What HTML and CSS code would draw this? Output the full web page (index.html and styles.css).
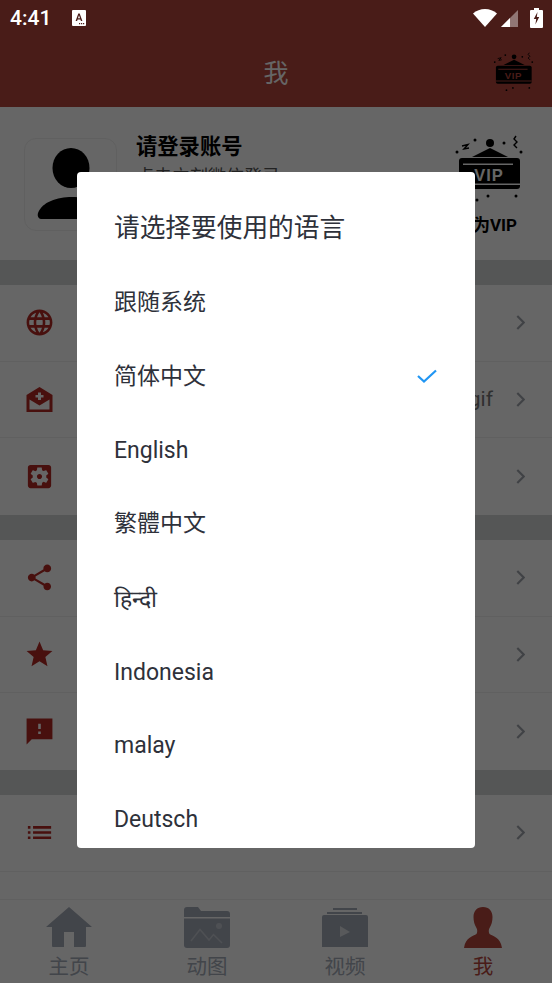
FILE: index.html
```html
<!DOCTYPE html>
<html lang="zh-CN">

<head>
  <meta charset="UTF-8">
  <meta name="viewport" content="width=device-width, initial-scale=1.0">
  <title>我</title>
  <link rel="stylesheet" href="styles.css">
</head>

<body>
  <div class="screen">
    <div class="status">
      <span class="clock">4:41</span>
      <svg class="status-a" width="14" height="16" viewBox="0 0 14 16">
        <path d="M1 0h12a1 1 0 0 1 1 1v14a1 1 0 0 1-1 1H1a1 1 0 0 1-1-1V1a1 1 0 0 1 1-1z" fill="#fff" />
        <path d="M3.600 11 6.300 3.500h1.400L10.400 11H8.900l-.5-1.600H5.600L5.100 11zM6 8.200h2L7 5.200z" fill="#491c18" />
        <path d="M7 13h1.200v1.200H7zM9 13h1.200v1.200H9zM11 13h1.200v1.200H11z" fill="#491c18" />
      </svg>
      <span class="status-space"></span>
      <svg class="status-wifi" width="24" height="18" viewBox="0 0 24 18">
        <path d="M0 4.500C3.400 1.700 7.500 0 12 0s8.600 1.700 12 4.500L12 18z" fill="#fff" />
      </svg>
      <svg class="status-signal" width="17" height="17" viewBox="0 0 17 17">
        <path d="M17 0v17H0z" fill="#fff" opacity=".4" />
        <path d="M9 8v9H0z" fill="#fff" />
      </svg>
      <svg class="status-battery" width="13" height="20" viewBox="0 0 13 20">
        <path d="M4 0h5v2h3a1 1 0 0 1 1 1v16a1 1 0 0 1-1 1H1a1 1 0 0 1-1-1V3a1 1 0 0 1 1-1h3z" fill="#fff" />
        <path d="M7.500 4 3.800 11h2.400L5.400 16.500 9.200 9H6.800z" fill="#491c18" />
      </svg>
    </div>

    <header class="topbar">
      <h1>我</h1>
      <svg class="topbar-vip" viewBox="0 0 70 72">
        <circle cx="36" cy="8" r="4" />
        <path d="M18 22 36 13 54 22z" />
        <rect x="5" y="23" width="61" height="31" rx="3" />
        <path class="vip-cut" d="M9 28.500h50v1.400H9zM5 48.500h61v1.400H5z" />
        <text class="vip-text" x="35" y="46" text-anchor="middle">VIP</text>
        <circle cx="21" cy="5" r="1.500" />
        <circle cx="50" cy="8" r="1.500" />
        <circle cx="3" cy="17" r="1.500" />
        <circle cx="67" cy="17" r="1.500" />
        <circle cx="23" cy="65" r="1.500" />
        <circle cx="34" cy="61" r="1.500" />
        <circle cx="62" cy="61" r="1.500" />
        <path class="vip-line" d="M8 11l6-1.500-4 4.500 5-1M62 1l-2 3 3 3-3 3 3 3" />
      </svg>
    </header>

    <section class="profile">
      <div class="avatar">
        <svg width="70" height="74" viewBox="0 0 70 74">
          <ellipse cx="34" cy="21" rx="18.500" ry="20" />
          <path d="M1 66C5 55 20 50 35 50s30 5 34 16c1 4-1 6-4 6H5c-3 0-5-2-4-6z" />
        </svg>
      </div>
      <div class="profile-text">
        <div class="profile-name">请登录账号</div>
        <div class="profile-sub">点击立刻微信登录</div>
      </div>
      <div class="profile-vip">
        <svg class="profile-vip-icon" viewBox="0 0 70 72">
          <circle cx="36" cy="8" r="4" />
          <path d="M18 22 36 13 54 22z" />
          <rect x="5" y="23" width="61" height="31" rx="3" />
          <path class="vip-cut" d="M9 28.500h50v1.400H9zM5 48.500h61v1.400H5z" />
          <text class="vip-text" x="35" y="46" text-anchor="middle">VIP</text>
          <circle cx="21" cy="5" r="1.500" />
          <circle cx="50" cy="8" r="1.500" />
          <circle cx="3" cy="17" r="1.500" />
          <circle cx="67" cy="17" r="1.500" />
          <circle cx="23" cy="65" r="1.500" />
          <circle cx="34" cy="61" r="1.500" />
          <circle cx="62" cy="61" r="1.500" />
          <path class="vip-line" d="M8 11l6-1.500-4 4.500 5-1M62 1l-2 3 3 3-3 3 3 3" />
        </svg>
        <span>成为VIP</span>
      </div>
    </section>

    <div class="group">
      <div class="row">
        <svg class="row-icon" viewBox="0 0 24 24"><path d="M11.990 2C6.470 2 2 6.480 2 12s4.470 10 9.990 10C17.520 22 22 17.520 22 12S17.520 2 11.990 2zm6.930 6h-2.950c-.32-1.250-.78-2.450-1.380-3.560 1.840.63 3.370 1.910 4.330 3.560zM12 4.040c.83 1.200 1.480 2.530 1.910 3.960h-3.820c.43-1.430 1.080-2.760 1.910-3.960zM4.260 14C4.100 13.360 4 12.690 4 12s.1-1.360.26-2h3.380c-.08.66-.14 1.320-.14 2 0 .68.06 1.340.14 2H4.260zm.82 2h2.950c.32 1.250.78 2.450 1.380 3.560-1.840-.63-3.370-1.900-4.330-3.560zm2.950-8H5.080c.96-1.660 2.490-2.930 4.330-3.560C8.810 5.550 8.350 6.750 8.030 8zM12 19.960c-.83-1.200-1.480-2.530-1.910-3.960h3.820c-.43 1.430-1.080 2.760-1.910 3.960zM14.340 14H9.660c-.09-.66-.16-1.320-.16-2 0-.68.07-1.350.16-2h4.680c.09.650.16 1.320.16 2 0 .68-.07 1.340-.16 2zm.25 5.560c.6-1.110 1.060-2.310 1.380-3.560h2.950c-.96 1.650-2.490 2.930-4.330 3.560zM16.360 14c.08-.66.14-1.320.14-2 0-.68-.06-1.340-.14-2h3.380c.16.64.26 1.310.26 2s-.1 1.360-.26 2h-3.380z" /></svg>
        <svg class="chevron" viewBox="0 0 8 14"><path d="M1 1l6 6-6 6" /></svg>
      </div>
      <div class="row">
        <svg class="row-icon" viewBox="0 0 31 31"><path fill-rule="evenodd" d="M15.500 3 28.500 11v17h-26V11zM14 8.500V11h-2.500v2.500H14V16h3v-2.500h2.500V11H17V8.500zM5.500 15.500V25.500h20V15.500l-10 6z" /></svg>
        <span class="row-value">gif</span>
        <svg class="chevron" viewBox="0 0 8 14"><path d="M1 1l6 6-6 6" /></svg>
      </div>
      <div class="row">
        <svg class="row-icon" viewBox="0 0 24 24"><path d="M12 10c-1.100 0-2 .9-2 2s.9 2 2 2 2-.9 2-2-.9-2-2-2zm7-7H5c-1.110 0-2 .9-2 2v14c0 1.100.89 2 2 2h14c1.110 0 2-.9 2-2V5c0-1.100-.89-2-2-2zm-1.750 9c0 .23-.02.46-.05.68l1.480 1.160c.13.11.17.3.08.45l-1.400 2.420c-.09.15-.27.21-.43.15l-1.740-.7c-.36.28-.76.51-1.180.69l-.26 1.850c-.03.17-.18.3-.35.3h-2.800c-.17 0-.32-.13-.35-.29l-.26-1.850c-.43-.18-.82-.41-1.180-.69l-1.740.7c-.16.06-.34 0-.43-.15l-1.400-2.420c-.09-.15-.05-.34.08-.45l1.480-1.160c-.03-.23-.05-.46-.05-.69 0-.23.02-.46.05-.68l-1.480-1.160c-.13-.11-.17-.3-.08-.45l1.400-2.420c.09-.15.27-.21.43-.15l1.740.7c.36-.28.76-.51 1.180-.69l.26-1.850c.03-.17.18-.3.35-.3h2.800c.17 0 .32.13.35.29l.26 1.850c.43.18.82.41 1.180.69l1.740-.7c.16-.06.34 0 .43.15l1.400 2.420c.09.15.05.34-.08.45l-1.480 1.160c.03.23.05.46.05.69z" /></svg>
        <svg class="chevron" viewBox="0 0 8 14"><path d="M1 1l6 6-6 6" /></svg>
      </div>
    </div>

    <div class="group">
      <div class="row">
        <svg class="row-icon" viewBox="0 0 24 24"><path d="M18 16.080c-.76 0-1.440.3-1.960.77L8.910 12.700c.05-.23.09-.46.09-.7s-.04-.47-.09-.7l7.050-4.110c.54.5 1.250.81 2.040.81 1.660 0 3-1.340 3-3s-1.340-3-3-3-3 1.340-3 3c0 .24.04.47.09.7L8.040 9.810C7.500 9.310 6.790 9 6 9c-1.660 0-3 1.340-3 3s1.340 3 3 3c.79 0 1.500-.31 2.040-.81l7.120 4.160c-.05.21-.08.43-.08.65 0 1.610 1.310 2.920 2.920 2.920 1.610 0 2.920-1.310 2.920-2.920s-1.310-2.920-2.920-2.920z" /></svg>
        <svg class="chevron" viewBox="0 0 8 14"><path d="M1 1l6 6-6 6" /></svg>
      </div>
      <div class="row">
        <svg class="row-icon" viewBox="0 0 24 24"><path d="M12 17.270 18.180 21l-1.640-7.030L22 9.240l-7.190-.61L12 2 9.190 8.630 2 9.240l5.460 4.730L5.820 21z" /></svg>
        <svg class="chevron" viewBox="0 0 8 14"><path d="M1 1l6 6-6 6" /></svg>
      </div>
      <div class="row">
        <svg class="row-icon" viewBox="0 0 24 24"><path d="M22 2H2v20l4-4h16zM13 14h-2v-2h2zm0-4h-2V6h2z" /></svg>
        <svg class="chevron" viewBox="0 0 8 14"><path d="M1 1l6 6-6 6" /></svg>
      </div>
    </div>

    <div class="group group-last">
      <div class="row">
        <svg class="row-icon" viewBox="0 0 24 24"><path d="M3 13h2v-2H3v2zm0 4h2v-2H3v2zm0-8h2V7H3v2zm4 4h14v-2H7v2zm0 4h14v-2H7v2zM7 7v2h14V7H7z" /></svg>
        <svg class="chevron" viewBox="0 0 8 14"><path d="M1 1l6 6-6 6" /></svg>
      </div>
    </div>

    <nav class="tabs">
      <div class="tab">
        <svg width="46" height="41" viewBox="0 0 46 41"><path d="M23 0 46 20H40V39a1 1 0 0 1-1 1H28V25H18V40H7a1 1 0 0 1-1-1V20H0z" /></svg>
        <span>主页</span>
      </div>
      <div class="tab">
        <svg width="46" height="41" viewBox="0 0 46 41">
          <path d="M0 3a3 3 0 0 1 3-3h11l3 4h26a3 3 0 0 1 3 3v3H0z" />
          <path d="M0 11.500h46V38a3 3 0 0 1-3 3H3a3 3 0 0 1-3-3z" />
          <circle cx="35" cy="19" r="3" fill="#fff" opacity=".35" />
          <path d="M7 34 16 22.500 25 33 29.500 27.500 38 36" class="tab-cut" />
        </svg>
        <span>动图</span>
      </div>
      <div class="tab">
        <svg width="46" height="41" viewBox="0 0 46 41">
          <path d="M11 1h24v2H11zM5 5h35v2H5z" />
          <path d="M2 8h42a2 2 0 0 1 2 2v30H0V10a2 2 0 0 1 2-2z" />
          <path d="M18 19 28 25 18 30z" fill="#fff" opacity=".6" />
        </svg>
        <span>视频</span>
      </div>
      <div class="tab tab-active">
        <svg width="38" height="41" viewBox="0 0 38 41"><path d="M19 0c6 0 9.500 4 9.500 10 0 4-1 8-3 11-1 2-1 4 0 6 3 2 11 3 12.500 14H0C1.500 30 9.500 29 12.500 27c1-2 1-4 0-6-2-3-3-7-3-11C9.500 4 13 0 19 0z" /></svg>
        <span>我</span>
      </div>
    </nav>

    <div class="overlay">
      <div class="dialog">
        <h2 class="dialog-title">请选择要使用的语言</h2>
        <div class="lang"><span class="lang-cjk">跟随系统</span></div>
        <div class="lang">
          <span class="lang-cjk">简体中文</span>
          <svg class="tick" width="20" height="14" viewBox="0 0 20 14"><path d="M1 7l6 5.500L19 1.500" /></svg>
        </div>
        <div class="lang">English</div>
        <div class="lang"><span class="lang-cjk">繁體中文</span></div>
        <div class="lang">हिन्दी</div>
        <div class="lang">Indonesia</div>
        <div class="lang">malay</div>
        <div class="lang">Deutsch</div>
      </div>
    </div>
  </div>
</body>

</html>
```

FILE: styles.css
```css
* {
  box-sizing: border-box;
}
body {
  margin: 0;
  font-family: Roboto, 'Noto Sans CJK SC', sans-serif;
  background-color: #fff;
}
.screen {
  position: relative;
  width: 552px;
  height: 983px;
  overflow: hidden;
  display: flex;
  flex-direction: column;
  background-color: #fff;
}
.status {
  height: 36px;
  flex: none;
  padding: 0 9px 0 10px;
  display: flex;
  align-items: center;
  background-color: #491c18;
  position: relative;
  z-index: 2;
}
.clock {
  color: #fff;
  font-size: 21px;
  font-weight: 500;
  width: 62px;
}
.status-space {
  flex: 1;
}
.status-signal {
  margin-left: 4px;
}
.status-battery {
  margin-left: 12px;
}
.topbar {
  height: 71px;
  flex: none;
  padding-bottom: 2px;
  display: flex;
  align-items: center;
  justify-content: center;
  position: relative;
  background-color: #b6463c;
}
.topbar h1 {
  margin: 0;
  font-size: 25px;
  font-weight: 400;
  color: #fff;
}
.topbar-vip {
  position: absolute;
  left: 493px;
  top: 16px;
  width: 41px;
  height: 42.500px;
  --cut: #b6463c;
}
.profile {
  height: 153px;
  flex: none;
  padding: 31px 28px 0 24px;
  display: flex;
  align-items: flex-start;
}
.avatar {
  width: 93px;
  height: 93px;
  flex: none;
  border: 1px solid #f0f0f0;
  border-radius: 12px;
  padding: 8px 0 0 12px;
}
.profile-text {
  margin-left: 19px;
  flex: 1;
}
.profile-name {
  font-size: 21.300px;
  line-height: 30px;
  font-weight: 700;
  margin-top: -6px;
  color: #000;
}
.profile-sub {
  font-size: 18px;
  line-height: 30px;
  color: #555;
}
.profile-vip {
  width: 70px;
  margin-top: -3px;
  display: flex;
  flex-direction: column;
  align-items: flex-end;
  font-size: 17px;
  font-weight: 700;
  color: #000;
  white-space: nowrap;
}
.profile-vip-icon {
  width: 70px;
  height: 72px;
  --cut: #fff;
}
.profile-vip span {
  margin-top: 4px;
  margin-right: 7px;
}
.vip-cut {
  fill: var(--cut);
}
.vip-text {
  font-family: 'Liberation Sans', sans-serif;
  font-size: 16.500px;
  font-weight: 700;
  letter-spacing: 1px;
  fill: var(--cut);
}
.vip-line {
  fill: none;
  stroke: #000;
  stroke-width: 1.400;
}
.group {
  flex: none;
  border-top: 25px solid #d4d6d6;
}
.row {
  height: 76.670px;
  padding: 0 27px 0 24px;
  display: flex;
  align-items: center;
  justify-content: space-between;
  border-bottom: 1px solid #f0f0f0;
}
.group .row:last-child {
  border-bottom: none;
}
.group-last .row:last-child {
  border-bottom: 1px solid #f0f0f0;
}
.row-icon {
  width: 31px;
  height: 31px;
  flex: none;
  fill: #b42a24;
}
.row-value {
  margin-left: auto;
  margin-right: 23px;
  font-size: 21px;
  color: #777;
}
.chevron {
  width: 9px;
  height: 15px;
  flex: none;
  fill: none;
  stroke: #a0a5ad;
  stroke-width: 2;
}
.tabs {
  position: absolute;
  left: 0;
  right: 0;
  bottom: 0;
  height: 84px;
  padding-top: 7px;
  display: flex;
  background-color: #fff;
  border-top: 1px solid #f0f0f0;
}
.tab {
  flex: 1;
  display: flex;
  flex-direction: column;
  align-items: center;
  font-size: 20.500px;
  line-height: 28px;
  color: #a5acb9;
}
.tab span {
  margin-top: 5px;
}
.tab svg {
  fill: #a5acb9;
}
.tab .tab-cut {
  fill: none;
  stroke: #fff;
  stroke-opacity: .35;
  stroke-width: 1.500;
}
.tab-active {
  color: #b6463c;
}
.tab-active svg {
  fill: #b6463c;
}
.overlay {
  position: absolute;
  top: 36px;
  left: 0;
  right: 0;
  bottom: 0;
  background-color: rgba(0, 0, 0, 0.6);
}
.dialog {
  position: absolute;
  top: 136px;
  left: 77px;
  width: 398px;
  height: 676px;
  overflow: hidden;
  border-radius: 4px;
  background-color: #fff;
  color: #2e313a;
}
.dialog-title {
  margin: 0;
  height: 93px;
  padding: 38px 37px 0;
  font-size: 25.700px;
  line-height: 36px;
  font-weight: 400;
}
.lang {
  height: 73.850px;
  padding: 2px 38px 0 37px;
  display: flex;
  align-items: center;
  justify-content: space-between;
  font-size: 23px;
}
.lang-cjk {
  margin-bottom: 6px;
}
.tick {
  margin-bottom: 2px;
  fill: none;
  stroke: #2196f3;
  stroke-width: 2.200;
}
```
